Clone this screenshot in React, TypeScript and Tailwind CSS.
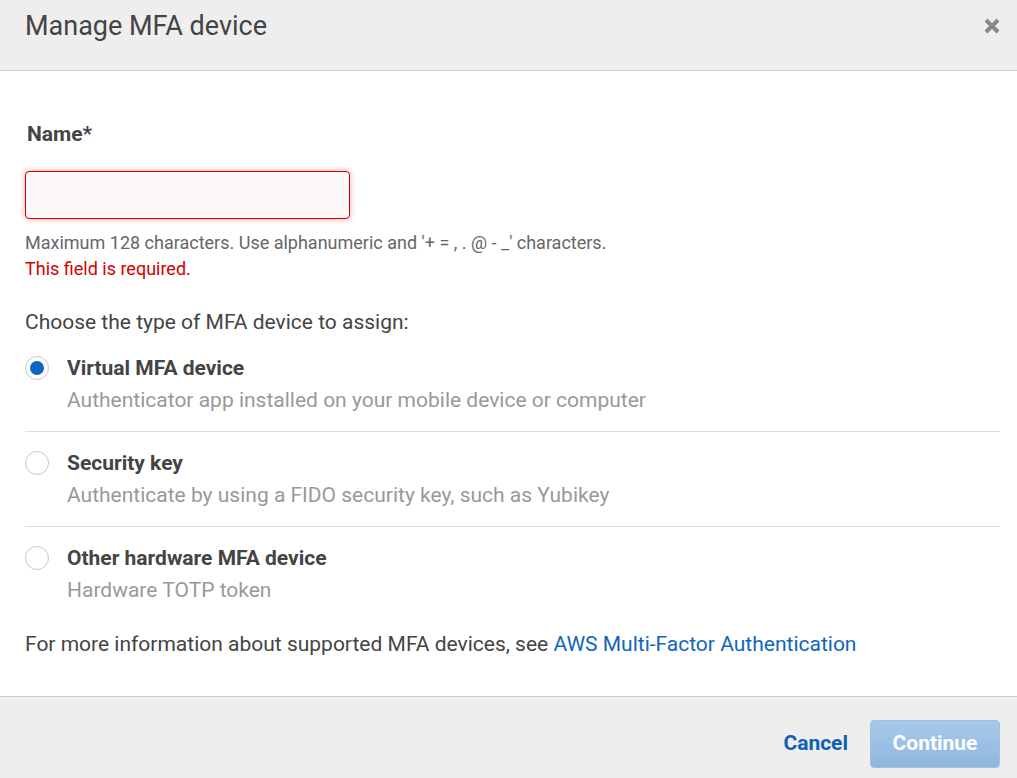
import { useState } from "react";

const options = [
  {
    id: "virtual",
    title: "Virtual MFA device",
    desc: "Authenticator app installed on your mobile device or computer",
  },
  {
    id: "key",
    title: "Security key",
    desc: "Authenticate by using a FIDO security key, such as Yubikey",
  },
  {
    id: "hardware",
    title: "Other hardware MFA device",
    desc: "Hardware TOTP token",
  },
];

const App = () => {
  const [selected, setSelected] = useState("virtual");

  return (
    <div className="w-[1017px] h-[778px] flex flex-col bg-white font-['Roboto',sans-serif] overflow-hidden">
      {/* header */}
      <div className="h-[71px] shrink-0 bg-[#eeeeee] border-b border-[#cccccc] flex items-start justify-between pl-[25px] pr-[16px] pt-[8px]">
        <h1 className="text-[27px] leading-[36px] text-[#444444]">Manage MFA device</h1>
        <button className="mt-[9px] text-[#888888]">
          <svg width="18" height="18" viewBox="0 0 18 18">
            <path d="M3 3 L15 15 M15 3 L3 15" stroke="#888888" strokeWidth="4" strokeLinecap="butt" />
          </svg>
        </button>
      </div>

      {/* body */}
      <div className="flex-1 pl-[25px] pr-[17px] pt-[50px]">
        <label className="block pl-[2px] text-[21px] leading-[26px] font-bold text-[#444444]">Name*</label>
        <input
          className="mt-[24px] block w-[325px] h-[48px] rounded-[4px] border border-[#d50000] bg-[#fff8f8] shadow-[0_0_6px_rgba(213,0,0,0.35)] outline-none px-3 text-[18px]"
        />
        <p className="mt-[13px] text-[18px] leading-[22px] text-[#666666]">
          Maximum 128 characters. Use alphanumeric and '+ = , . @ - _' characters.
        </p>
        <p className="mt-[4px] text-[18px] leading-[22px] text-[#d50000]">This field is required.</p>

        <p className="mt-[29px] text-[21px] leading-[26px] text-[#444444]">
          Choose the type of MFA device to assign:
        </p>

        <div className="mt-[20px] flex flex-col">
          {options.map((o, i) => (
            <div
              key={o.id}
              onClick={() => setSelected(o.id)}
              className={
                "flex gap-[18px] cursor-pointer " +
                (i < options.length - 1 ? "border-b border-[#dddddd] pb-[18px] mb-[18px]" : "")
              }
            >
              <div className="pt-[1px]">
                <div className="w-[24px] h-[24px] rounded-full border border-[#c8c8c8] bg-white flex items-center justify-center">
                  {selected === o.id && <div className="w-[14px] h-[14px] rounded-full bg-[#0f65c0]" />}
                </div>
              </div>
              <div className="flex flex-col">
                <span className="text-[21px] leading-[26px] font-bold text-[#444444]">{o.title}</span>
                <span className="mt-[6px] text-[21px] leading-[26px] text-[#999999]">{o.desc}</span>
              </div>
            </div>
          ))}
        </div>

        <p className="mt-[28px] text-[21px] leading-[26px] text-[#444444]">
          For more information about supported MFA devices, see{" "}
          <a className="text-[#0f65c0]" href="#">
            AWS Multi-Factor Authentication
          </a>
        </p>
      </div>

      {/* footer */}
      <div className="h-[82px] shrink-0 bg-[#eeeeee] border-t border-[#cccccc] flex items-start justify-end gap-[22px] pr-[17px] pt-[23px]">
        <button className="h-[48px] text-[21px] font-bold text-[#0f60b6]">Cancel</button>
        <button className="w-[130px] h-[48px] rounded-[4px] border border-[#9fc2e4] bg-gradient-to-b from-[#a9c9e8] to-[#8fb6e0] text-[21px] font-bold text-white">
          Continue
        </button>
      </div>
    </div>
  );
};

export default App;
